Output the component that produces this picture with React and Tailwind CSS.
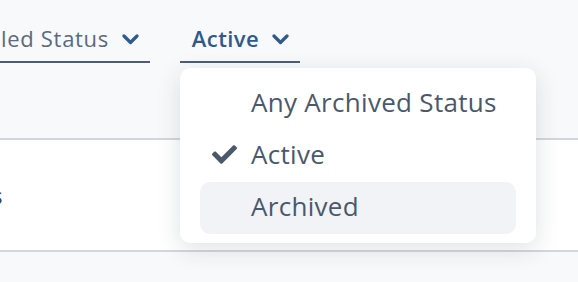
import React from 'react';
import { FaCheck } from 'react-icons/fa';

const font = { fontFamily: '"Open Sans", "Noto Sans", sans-serif' };

function Chevron() {
  return (
    <svg width="17" height="11" viewBox="0 0 17 11" className="shrink-0 mt-[2px]">
      <path d="M2 2l6.5 6.5L15 2" fill="none" stroke="#2f5a8a" strokeWidth="3.2" strokeLinecap="round" strokeLinejoin="round" />
    </svg>
  );
}

function FilterButton({ label, active, className }) {
  return (
    <div className={`flex items-center justify-end gap-[13px] h-[44px] pb-[3px] pr-[11px] border-b-2 border-[#4d5d72] ${className}`}>
      <span className={active ? 'whitespace-nowrap text-[22px] font-semibold tracking-[0.4px] text-[#2f5a8a]' : 'whitespace-nowrap text-[22px] tracking-[0.7px] text-[#5b6a7d]'}>{label}</span>
      <Chevron />
    </div>
  );
}

const options = [
  { label: 'Any Archived Status' },
  { label: 'Active', checked: true },
  { label: 'Archived', hover: true },
];

export default function App() {
  return (
    <div className="relative w-[578px] h-[282px] overflow-hidden bg-[#f8f9fb]" style={font}>
      <div className="flex items-end h-[63px] gap-[30px]">
        <FilterButton label="led Status" className="w-[150px]" />
        <FilterButton label="Active" active className="w-[120px]" />
      </div>

      <div className="mt-[75px] h-[114px] bg-white border-y-2 border-[#d3d6dc] flex items-center">
        <span className="ml-[-8px] text-[22px] text-[#3a4250]">s</span>
      </div>

      <div className="absolute left-[180px] top-[68px] w-[356px] rounded-[10px] bg-white px-[20px] pt-[10px] pb-[9px] shadow-[0_6px_24px_rgba(30,40,60,0.14)]">
        {options.map((o) => (
          <div
            key={o.label}
            className={`relative flex items-center h-[52px] pl-[51px] pb-[3px] rounded-[10px] text-[26px] tracking-[0.3px] text-[#4a586b] ${o.hover ? 'bg-[#f1f3f7]' : ''}`}
          >
            {o.checked && <FaCheck className="absolute left-[12px] top-[12px] text-[#4a586b]" size={25} />}
            {o.label}
          </div>
        ))}
      </div>
    </div>
  );
}
